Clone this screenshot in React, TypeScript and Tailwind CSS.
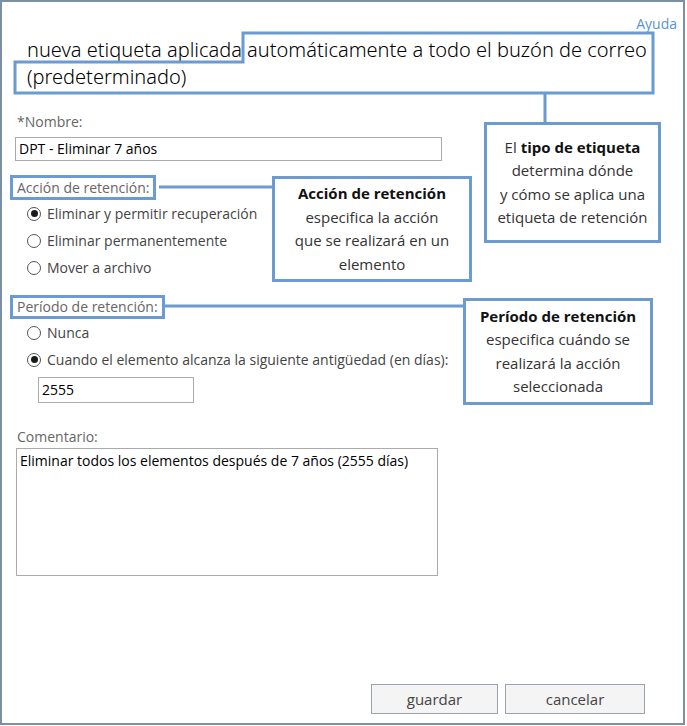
import React from 'react';

const ui = "font-['Open_Sans','Noto_Sans',sans-serif]";

function Radio({ checked, label }: { checked?: boolean; label: string }) {
  return (
    <div className="flex items-center h-[27px] pl-[10px] text-[14px] text-[#444]">
      <span className="w-[14px] h-[14px] rounded-full border border-[#555] bg-white flex items-center justify-center mr-[6px] shrink-0">
        {checked && <span className="w-[7px] h-[7px] rounded-full bg-[#1a1a1a]" />}
      </span>
      <span>{label}</span>
    </div>
  );
}

function Callout({ className, children }: { className: string; children: React.ReactNode }) {
  return (
    <div
      className={`absolute bg-white border-[3px] border-[#6b9bd0] flex flex-col justify-center text-center text-[15px] leading-[23.5px] text-[#333] ${className}`}
    >
      {children}
    </div>
  );
}

export default function App() {
  return (
    <div className={`w-[685px] h-[725px] border-2 border-[#7b8fa5] bg-white relative flex flex-col ${ui}`}>
      <div className="pt-[12px] pr-[6px] text-right text-[14px] leading-[20px] text-[#5b93d1]">Ayuda</div>

      <h1 className="mt-[2px] pl-[25px] w-[650px] font-['Noto_Sans','Open_Sans',sans-serif] text-[20px] leading-[27px] font-light text-black">
        nueva etiqueta aplicada automáticamente a todo el buzón de correo (predeterminado)
      </h1>

      <div className="px-[15px] flex flex-col">
        <label className="mt-[22px] text-[14px] leading-[20px] text-[#666]">*Nombre:</label>
        <div className="mt-[5px] -ml-[2px] w-[427px] h-[24px] border border-[#ababab] px-[3px] text-[14px] leading-[22px] text-black">
          DPT - Eliminar 7 años
        </div>

        <div className="mt-[14px] -ml-[7px] self-start h-[25px] border-[3px] border-[#6b9bd0] px-[4px] text-[14px] leading-[19px] text-[#666]">
          Acción de retención:
        </div>
        <Radio checked label="Eliminar y permitir recuperación" />
        <Radio label="Eliminar permanentemente" />
        <Radio label="Mover a archivo" />

        <div className="mt-[14px] -ml-[7px] self-start h-[24px] border-[3px] border-[#6b9bd0] px-[4px] text-[14px] leading-[18px] text-[#666]">
          Período de retención:
        </div>
        <Radio label="Nunca" />
        <Radio checked label="Cuando el elemento alcanza la siguiente antigüedad (en días):" />
        <div className="mt-[4px] ml-[21px] w-[156px] h-[26px] border border-[#ababab] px-[3px] text-[14px] leading-[24px] text-black">
          2555
        </div>

        <label className="mt-[24px] text-[14px] leading-[20px] text-[#666]">Comentario:</label>
        <div className="mt-[1px] -ml-[1px] w-[422px] h-[128px] border border-[#ababab] px-[3px] pt-[2px] text-[14px] leading-[20px] text-black">
          Eliminar todos los elementos después de 7 años (2555 días)
        </div>
      </div>

      <div className="mt-auto flex justify-end gap-[7px] pr-[38px] pb-[9px]">
        <button className="w-[127px] h-[30px] bg-[#f4f4f4] border border-[#9aa4ac] text-[15px] text-[#444]">guardar</button>
        <button className="w-[140px] h-[30px] bg-[#f4f4f4] border border-[#9aa4ac] text-[15px] text-[#444]">cancelar</button>
      </div>

      {/* annotation overlay */}
      <svg className="absolute left-0 top-0 pointer-events-none" width="681" height="721">
        <g fill="none" stroke="#6b9bd0" strokeWidth="3">
          <polygon points="241,31 651,31 651,91 13,91 13,60 241,60" />
          <line x1="543" y1="91" x2="543" y2="121" />
          <line x1="157" y1="185" x2="270" y2="185" />
          <line x1="162" y1="304" x2="461" y2="304" />
        </g>
      </svg>

      <Callout className="left-[482px] top-[120px] w-[177px] h-[121px]">
        <div>
          El <b className="text-[#111]">tipo de etiqueta</b>
        </div>
        <div>determina dónde</div>
        <div>y cómo se aplica una</div>
        <div>etiqueta de retención</div>
      </Callout>

      <Callout className="left-[270px] top-[174px] w-[200px] h-[106px]">
        <div className="font-bold text-[#111]">Acción de retención</div>
        <div>especifica la acción</div>
        <div>que se realizará en un</div>
        <div>elemento</div>
      </Callout>

      <Callout className="left-[461px] top-[296px] w-[190px] h-[107px]">
        <div className="font-bold text-[#111]">Período de retención</div>
        <div>especifica cuándo se</div>
        <div>realizará la acción</div>
        <div>seleccionada</div>
      </Callout>
    </div>
  );
}
